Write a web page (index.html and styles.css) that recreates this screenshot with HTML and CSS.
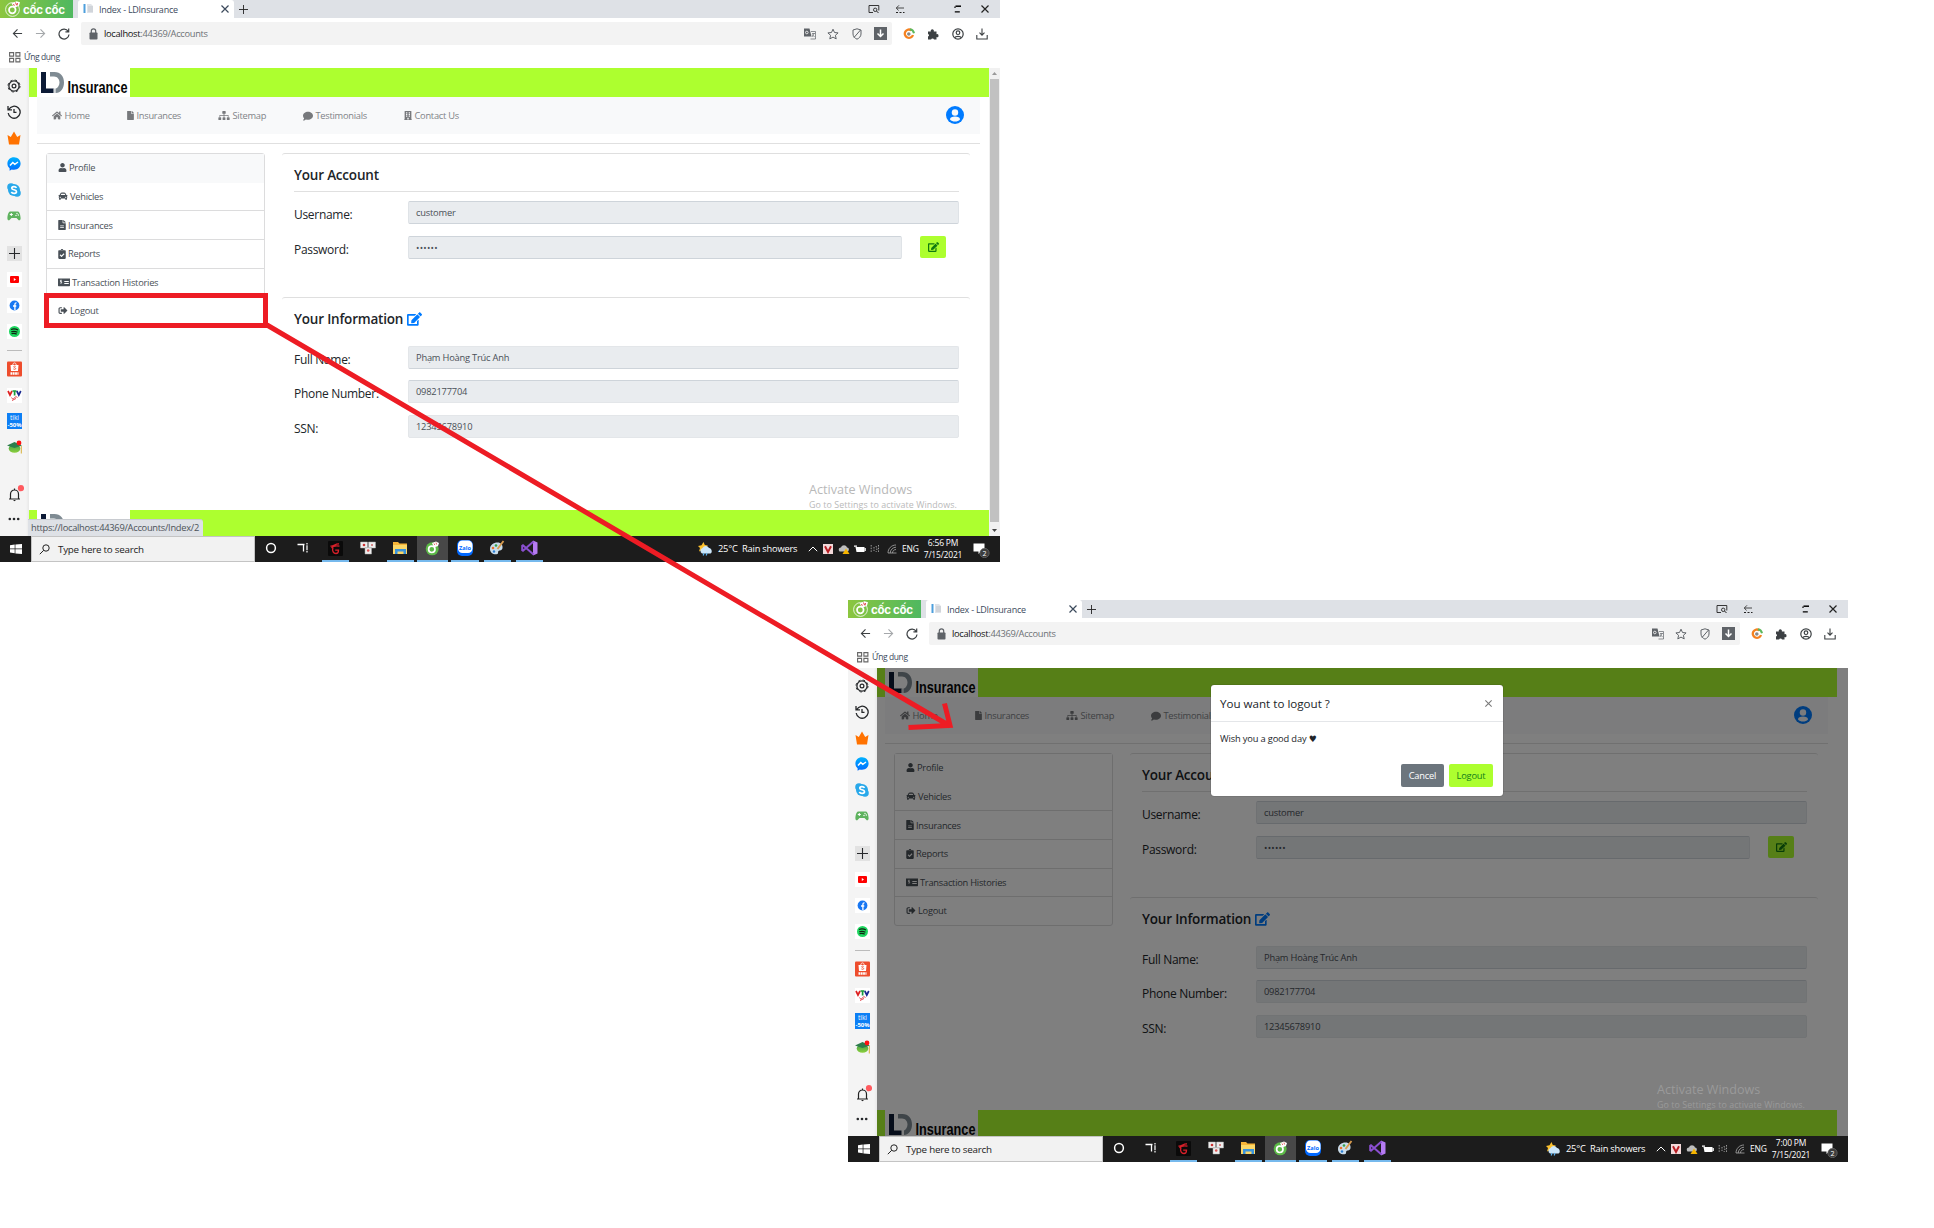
FILE: index.html
```html
<!DOCTYPE html>
<html lang="vi">
<head>
<meta charset="utf-8">
<title>Index - LDInsurance</title>
<link rel="stylesheet" href="styles.css">
</head>
<body>
<svg class="sprite" width="0" height="0">
  <defs>
    <linearGradient id="gMsg" x1="0" y1="0" x2="0" y2="1"><stop offset="0" stop-color="#00b2ff"/><stop offset="1" stop-color="#006aff"/></linearGradient>
    <linearGradient id="gCap" x1="0" y1="0" x2="0" y2="1"><stop offset="0" stop-color="#3f9a4a"/><stop offset="1" stop-color="#8dd13c"/></linearGradient>
  </defs>
  <symbol id="home" viewBox="0 0 576 512"><path d="M280 148 96 300v164c0 9 7 16 16 16l112-1c9 0 16-7 16-16v-95c0-9 7-16 16-16h64c9 0 16 7 16 16v95c0 9 7 16 16 16l112 1c9 0 16-7 16-16V300L296 148a12 12 0 0 0-16 0zm292 103-84-69V44c0-7-5-12-12-12h-56c-7 0-12 5-12 12v72l-90-74a48 48 0 0 0-61 0L4 251a12 12 0 0 0-1 17l25 31c4 5 12 6 17 2l235-194a12 12 0 0 1 16 0l235 194c5 4 13 3 17-2l26-31c4-5 3-13-2-17z"/></symbol>
  <symbol id="file" viewBox="0 0 384 512"><path d="M224 136V0H24C11 0 0 11 0 24v464c0 13 11 24 24 24h336c13 0 24-11 24-24V160H248c-13 0-24-11-24-24zm160-14v6H256V0h6c6 0 12 3 17 7l98 98c4 5 7 11 7 17z"/></symbol>
  <symbol id="filealt" viewBox="0 0 384 512"><path fill-rule="evenodd" d="M224 136V0H24C11 0 0 11 0 24v464c0 13 11 24 24 24h336c13 0 24-11 24-24V160H248c-13 0-24-11-24-24zm64 264H96v-40h192zm0-80H96v-40h192zm96-198v6H256V0h6c6 0 12 3 17 7l98 98c4 5 7 11 7 17z"/></symbol>
  <symbol id="sitemap" viewBox="0 0 640 512"><path d="M128 352H32c-18 0-32 14-32 32v96c0 18 14 32 32 32h96c18 0 32-14 32-32v-96c0-18-14-32-32-32zm-24-80h192v48h48v-48h192v48h48v-57c0-22-17-39-39-39H344v-64h40c18 0 32-14 32-32V32c0-18-14-32-32-32H256c-18 0-32 14-32 32v96c0 18 14 32 32 32h40v64H95c-22 0-39 17-39 39v57h48zm264 80h-96c-18 0-32 14-32 32v96c0 18 14 32 32 32h96c18 0 32-14 32-32v-96c0-18-14-32-32-32zm240 0h-96c-18 0-32 14-32 32v96c0 18 14 32 32 32h96c18 0 32-14 32-32v-96c0-18-14-32-32-32z"/></symbol>
  <symbol id="comment" viewBox="0 0 512 512"><path d="M256 32C115 32 0 125 0 240c0 50 21 95 57 131C45 421 3 467 2 468c-2 2-3 6-1 9s4 5 7 5c66 0 116-32 141-52 33 12 69 18 107 18 141 0 256-93 256-208S397 32 256 32z"/></symbol>
  <symbol id="building" viewBox="0 0 448 512"><path fill-rule="evenodd" d="M436 480h-20V24c0-13-11-24-24-24H56C43 0 32 11 32 24v456H12c-7 0-12 5-12 12v20h448v-20c0-7-5-12-12-12zM112 64h72v64h-72zm0 96h72v64h-72zm0 96h72v64h-72zm72 224v-96h80v96zm152-160h-72v-64h72zm0-96h-72v-64h72zm0-96h-72V64h72z"/></symbol>
  <symbol id="usercircle" viewBox="0 0 24 24"><circle cx="12" cy="12" r="12"/><circle cx="12" cy="8.600" r="4.300" fill="var(--hole,#fff)"/><path d="M5.300 18c0-3 3-4 6.700-4s6.700 1 6.700 4c-1.600 1.800-4 2.700-6.700 2.700S6.900 19.800 5.300 18z" fill="var(--hole,#fff)"/></symbol>
  <symbol id="user" viewBox="0 0 448 512"><path d="M224 256c71 0 128-57 128-128S295 0 224 0 96 57 96 128s57 128 128 128zm90 32h-17a174 174 0 0 1-146 0h-17C60 288 0 348 0 422v42c0 27 22 48 48 48h352c27 0 48-21 48-48v-42c0-74-60-134-134-134z"/></symbol>
  <symbol id="car" viewBox="0 0 512 512"><path fill-rule="evenodd" d="M500 168h-55l-8-20-21-52c-22-39-60-64-105-64H201c-45 0-83 25-105 64l-21 52-8 20H12c-8 0-14 7-12 15l6 24c1 5 6 9 12 9h20c-13 12-22 29-22 48v48c0 16 6 31 16 42v54c0 18 14 32 32 32h32c18 0 32-14 32-32v-32h256v32c0 18 14 32 32 32h32c18 0 32-14 32-32v-54c10-11 16-26 16-42v-48c0-19-9-36-22-48h20c6 0 11-4 12-9l6-24c2-8-4-15-12-15zm-348-48c8-15 28-24 49-24h110c21 0 41 9 49 24l24 56H128zM96 328c-19 0-32-13-32-32s13-32 32-32 48 29 48 48-29 16-48 16zm320 0c-19 0-48 3-48-16s29-48 48-48 32 13 32 32-13 32-32 32z"/></symbol>
  <symbol id="clip" viewBox="0 0 384 512"><path fill-rule="evenodd" d="M336 64h-80c0-35-29-64-64-64s-64 29-64 64H48c-26 0-48 22-48 48v352c0 27 22 48 48 48h288c27 0 48-21 48-48V112c0-26-21-48-48-48zM192 40a24 24 0 1 1 0 48 24 24 0 0 1 0-48zm121 232L176 408c-5 5-12 5-17 0l-82-82c-4-5-4-12 0-17l29-28c4-5 12-5 17 0l45 46 100-100c5-5 12-5 17 0l28 28c5 5 5 12 0 17z"/></symbol>
  <symbol id="check" viewBox="0 0 640 512"><path fill-rule="evenodd" d="M0 448c0 18 14 32 32 32h576c18 0 32-14 32-32V64H0zM336 200h240v50H336zm0 110h240v50H336zM100 200c0-40 30-50 46-52v-24h30v24c20 2 30 8 40 16l-18 26c-20-14-60-18-60 4 0 28 84 18 84 78 0 36-26 50-46 54v26h-30v-26c-20-2-38-10-48-20l20-26c22 18 66 20 66-4 0-30-84-20-84-76z"/></symbol>
  <symbol id="signout" viewBox="0 0 512 512"><path d="m497 273-168 168c-15 15-41 5-41-17v-96H152c-13 0-24-11-24-24v-96c0-13 11-24 24-24h136V88c0-21 26-32 41-17l168 168c9 9 9 25 0 34zM192 436v-40c0-7-5-12-12-12H96c-18 0-32-14-32-32V160c0-18 14-32 32-32h84c7 0 12-5 12-12V76c0-7-5-12-12-12H96c-53 0-96 43-96 96v192c0 53 43 96 96 96h84c7 0 12-5 12-12z"/></symbol>
  <symbol id="edit" viewBox="0 0 576 512"><path d="m403 83 90 90c4 4 4 10 0 14L274 406l-93 10c-12 2-23-9-21-21l10-93L389 83c4-4 10-4 14 0zm162-22-49-49c-15-15-40-15-55 0l-35 35c-4 4-4 10 0 14l90 90c4 4 10 4 14 0l35-35c15-15 15-40 0-55zM384 346v102H64V128h230c3 0 6-1 9-4l40-40c7-7 2-20-9-20H48C22 64 0 86 0 112v352c0 27 22 48 48 48h352c27 0 48-21 48-48V306c0-11-13-16-20-9l-40 40c-3 3-4 6-4 9z"/></symbol>
  <symbol id="close" viewBox="0 0 10 10"><path d="M1.500 1.500l7 7M8.500 1.500l-7 7" fill="none" stroke="currentColor" stroke-width="1.200"/></symbol>
  <symbol id="plus" viewBox="0 0 10 10"><path d="M5 0v10M0 5h10" fill="none" stroke="currentColor" stroke-width="1"/></symbol>
  <symbol id="back" viewBox="0 0 12 12"><path d="M11 6H1.500M6 1.500 1.500 6 6 10.500" fill="none" stroke="currentColor" stroke-width="1.200"/></symbol>
  <symbol id="forward" viewBox="0 0 12 12"><path d="M1 6h9.500M6 1.500 10.500 6 6 10.500" fill="none" stroke="currentColor" stroke-width="1.200"/></symbol>
  <symbol id="reload" viewBox="0 0 12 12"><path d="M10.200 3.300A5 5 0 1 0 11 6.500M10.700.600v3.200H7.400" fill="none" stroke="currentColor" stroke-width="1.200"/></symbol>
  <symbol id="lock" viewBox="0 0 9 12"><rect x=".5" y="4.500" width="8" height="7" rx=".8"/><path d="M2.300 5V3a2.200 2.200 0 0 1 4.400 0v2" fill="none" stroke="currentColor" stroke-width="1.200"/></symbol>
  <symbol id="apps" viewBox="0 0 12 11"><path d="M.6.600h4v3.500h-4zM6.900.600h4v3.500h-4zM.6 6.400h4v3.500h-4zM6.900 6.400h4v3.500h-4z" fill="none" stroke="currentColor" stroke-width="1.100"/></symbol>
  <symbol id="tabsearch" viewBox="0 0 12 10"><path d="M5 8.500H1v-7h9.800v5" fill="none" stroke="currentColor" stroke-width=".9"/><circle cx="7.200" cy="5.800" r="1.700" fill="none" stroke="currentColor" stroke-width=".9"/><path d="m8.500 7 2 2" stroke="currentColor"/></symbol>
  <symbol id="minim" viewBox="0 0 10 10"><path d="M9 4H1.500M4 1.300 1.300 4 3.500 6.500" fill="none" stroke="currentColor" stroke-width=".8"/><path d="M1 8.500h8.500" stroke="currentColor" stroke-dasharray="2 1.500"/></symbol>
  <symbol id="restore" viewBox="0 0 8 8"><path d="M1.500 1.200H7" stroke="currentColor" stroke-width="1.500"/><path d="M1 1.500v1.500M.8 6.800h5" stroke="currentColor" stroke-width="1.200"/></symbol>
  <symbol id="translate" viewBox="0 0 12 12"><path d="M0 .5h5.500l2 8H0z"/><path d="M7 3.500h4.500v7.500H6.500M8 5.500h3M9.800 5.500 8 9M8.300 6.500l2.200 2.500" fill="none" stroke="currentColor" stroke-width=".7"/><circle cx="2.800" cy="4.500" r="1.300" fill="none" stroke="#fff" stroke-width=".8"/></symbol>
  <symbol id="star" viewBox="0 0 12 12"><path d="m6 1.200 1.500 3.300 3.600.400-2.700 2.400.8 3.600L6 9.100l-3.200 1.800.8-3.600L.9 4.900l3.600-.4z" fill="none" stroke="currentColor"/></symbol>
  <symbol id="shield" viewBox="0 0 12 12"><path d="M6 .8 2 2v4c0 2.500 2 4.300 4 5.200 2-.9 4-2.700 4-5.200V2zM3 9.500 9.500 2" fill="none" stroke="currentColor"/></symbol>
  <symbol id="dlbox" viewBox="0 0 13 13"><path d="M0 0h13v13H0z"/><path d="M6.500 2.500v7M3.500 6.500l3 3 3-3" fill="none" stroke="#fff" stroke-width="1.500"/></symbol>
  <symbol id="cring" viewBox="0 0 12 12"><path d="M8.500 2.300A4.200 4.200 0 1 0 10 7" fill="none" stroke="#f58220" stroke-width="2.300"/><path d="M7 1.200a5 5 0 0 1 4 4" fill="none" stroke="#5cb85c" stroke-width="2"/><circle cx="5.800" cy="6" r="1.800" fill="#888"/></symbol>
  <symbol id="puzzle" viewBox="0 0 12 12"><path d="M1 3.500h2.800a1.600 1.600 0 1 1 3 0H9.500v2.800a1.500 1.500 0 1 1 0 2.800V11.500H7a1.500 1.500 0 0 0-2.900 0H1V8.600a1.400 1.400 0 0 0 0-2.700z"/></symbol>
  <symbol id="person" viewBox="0 0 12 12"><circle cx="6" cy="6" r="5.200" fill="none" stroke="currentColor" stroke-width="1.200"/><circle cx="6" cy="4.700" r="1.800" fill="none" stroke="currentColor" stroke-width="1.200"/><path d="M2.700 9.700c.8-1.700 5.800-1.700 6.600 0" fill="none" stroke="currentColor" stroke-width="1.200"/></symbol>
  <symbol id="download" viewBox="0 0 12 12"><path d="M6 .5v6.500M3.500 4.700 6 7.200l2.500-2.500M.8 7v4h10.400V7" fill="none" stroke="currentColor" stroke-width="1.100"/></symbol>
  <symbol id="gear" viewBox="0 0 14 14"><circle cx="7" cy="7" r="5.100" fill="none" stroke="currentColor" stroke-width="1.300"/><circle cx="7" cy="7" r="6" fill="none" stroke="currentColor" stroke-width="1" stroke-dasharray="2.356 2.356"/><circle cx="7" cy="7" r="1.900" fill="none" stroke="currentColor" stroke-width="1.200"/></symbol>
  <symbol id="history" viewBox="0 0 14 14"><path d="M1.800 4.500A6 6 0 1 1 1.200 8M1 1v3.800h4M7 4v3.300h2.500" fill="none" stroke="currentColor" stroke-width="1.300"/></symbol>
  <symbol id="crown" viewBox="0 0 14 14"><path d="m.5 4 3.300 2L7 .5 10.200 6l3.300-2-1.500 9.500H2z" fill="#ff7200"/></symbol>
  <symbol id="messenger" viewBox="0 0 14 14"><path d="M7 .3C3.200.300.400 3 .4 6.600c0 2 .8 3.600 2.200 4.700v2.400l2.100-1.200c.7.200 1.500.3 2.300.3 3.800 0 6.600-2.700 6.600-6.200S10.800.300 7 .300z" fill="url(#gMsg)"/><path d="m3 8.500 2.800-3 2 1.800L11 5" fill="none" stroke="#fff" stroke-width="1.500"/></symbol>
  <symbol id="skype" viewBox="0 0 14 14"><circle cx="7" cy="7" r="6" fill="#28a8ea"/><circle cx="4" cy="4" r="3.800" fill="#28a8ea"/><circle cx="10" cy="10" r="3.800" fill="#28a8ea"/><path d="M9.500 4.800C8.500 3 4.700 3.200 4.800 5.200c.1 2 4.700 1.200 4.700 3.500 0 2-4 2.200-5.200.3" fill="none" stroke="#fff" stroke-width="1.700"/></symbol>
  <symbol id="gamepad" viewBox="0 0 14 14"><path d="M3 2.500h8c1.500 0 2.500 4 2.600 6.500.1 2.500-1.600 3-2.600 1.500L9.500 9h-5L3 10.500C2 12 .3 11.500.400 9 .5 6.500 1.500 2.500 3 2.500z" fill="#5eb35e"/><path d="M4.300 4v3M2.800 5.500h3" stroke="#fff"/><circle cx="10" cy="4.500" r=".7" fill="#fff"/><circle cx="9" cy="6.500" r=".7" fill="#fff"/><circle cx="11.300" cy="6" r=".7" fill="#fff"/></symbol>
  <symbol id="youtube" viewBox="0 0 15 15"><path d="M0 0h15v15H0z" fill="#fff"/><rect x="3" y="4" width="9" height="7" rx="1" fill="#f00"/><path d="m6.800 6 2.200 1.500L6.800 9z" fill="#fff"/></symbol>
  <symbol id="facebook" viewBox="0 0 15 15"><path d="M0 0h15v15H0z" fill="#fff"/><circle cx="7.500" cy="7.500" r="4.900" fill="#1877f2"/><path d="M7.900 12.300V6.200c0-1 .5-1.400 1.600-1.300M6 8h3.300" stroke="#fff" stroke-width="1.300" fill="none"/></symbol>
  <symbol id="spotify" viewBox="0 0 15 15"><path d="M0 0h15v15H0z" fill="#fff"/><circle cx="7.500" cy="7.500" r="5.500" fill="#1ed760"/><path d="M4 5.500c2-.8 5-.6 7 .5M4.200 7.700c2-.6 4.500-.4 6.200.5M4.500 9.700c2-.5 3.700-.3 5.200.4" fill="none" stroke="#121" stroke-width="1.200"/></symbol>
  <symbol id="shopee" viewBox="0 0 15 15"><rect width="15" height="15" rx="1" fill="#ee4d2d"/><path d="M3.500 3.500h8l-.5 6H4z" fill="#fff"/><path d="M5.800 3.500c0-2.800 3.400-2.800 3.400 0" fill="none" stroke="#fff" stroke-width=".8"/><path d="M8.800 5c-1-.8-2.400-.3-2.200.5s2.100.6 2.100 1.600-1.600 1-2.400.3" fill="none" stroke="#ee4d2d" stroke-width=".8"/><path d="M3.500 12h8" stroke="#fff" stroke-width="2.400" stroke-dasharray="1.800 .5"/></symbol>
  <symbol id="vtv" viewBox="0 0 15 15"><path d="M0 0h15v15H0z" fill="#fff"/><path d="m1 3 2 4 2-4" fill="none" stroke="#d22" stroke-width="1.700"/><path d="M5.500 3h4M7.600 3v4.500" fill="none" stroke="#1a9a3a" stroke-width="1.700"/><path d="m9.800 3 2 4 2-4" fill="none" stroke="#1a2a90" stroke-width="1.700"/><path d="M4.500 9.500c1 2 2 2 3 .3s2-1 3-.3M5 12.500l4-2" fill="none" stroke="#e04a50" stroke-width="1"/></symbol>
  <symbol id="cap" viewBox="0 0 15 15"><ellipse cx="7.500" cy="8.500" rx="5.800" ry="4.300" fill="url(#gCap)"/><path d="m0 5.500 7.500-3.500L15 5.500 7.500 8z" fill="#2c7d4c"/><path d="M14.300 6v7.500" stroke="#d8b13a"/><circle cx="12" cy="3" r="2.400" fill="#f11"/></symbol>
  <symbol id="bell" viewBox="0 0 17 17"><path d="M2 14h11M3.500 14V9a4 4 0 0 1 8 0v5M7.500 5V3.500" fill="none" stroke="#222" stroke-width="1.200"/><path d="M6 15h3l-1.500 1.300z" fill="#222"/><circle cx="14" cy="3.200" r="3.100" fill="#ff5a5f"/></symbol>
  <symbol id="dots" viewBox="0 0 12 4"><circle cx="1.800" cy="2" r="1.300"/><circle cx="6" cy="2" r="1.300"/><circle cx="10.200" cy="2" r="1.300"/></symbol>
  <symbol id="cocmark" viewBox="0 0 16 16"><circle cx="7.500" cy="8.500" r="6.900" fill="none" stroke="#fff" stroke-width=".8"/><circle cx="7.300" cy="9" r="3.300" fill="none" stroke="#fff" stroke-width="1.700"/><path d="m6.500 2.500 5-2.200 3.500 1-1 3.500-4.500 2z" fill="#fff"/><path d="m8.500 3 .8 1.800M10.500 1.500l1 2.500M12.500 2l-.5 2.500" stroke="#d33" fill="none" stroke-width=".9"/></symbol>
  <symbol id="favicon" viewBox="0 0 12 12"><path d="M.5 1h2v9h-2z" fill="#4d9fdc"/><path d="M4 1h4l2 2v7H4z" fill="#e0e3e8"/><path d="M5 4h5M5 6h5M5 8h5" stroke="#b5bac2" stroke-width=".7"/></symbol>
  <symbol id="win" viewBox="0 0 12 10"><path d="m0 1.300 4.700-.7v4H0zM5.400.500 12 0v4.600H5.400zM0 5.300h4.700v4L0 8.600zM5.400 5.300H12V10l-6.600-.600z"/></symbol>
  <symbol id="find" viewBox="0 0 11 11"><circle cx="7" cy="4" r="3.200" fill="none" stroke="currentColor"/><path d="M4.700 6.300.8 10.200" stroke="currentColor"/></symbol>
  <symbol id="ring" viewBox="0 0 12 12"><circle cx="6" cy="6" r="4.400" fill="none" stroke="currentColor" stroke-width="1.500"/></symbol>
  <symbol id="task" viewBox="0 0 12 12"><path d="M.5 2.500h7M6.500 2.500v7" stroke="currentColor" stroke-width="1.300" fill="none"/><path d="M10 1v9.500" stroke="currentColor" stroke-width="1.200" stroke-dasharray="1.500 .8 5 .8"/></symbol>
  <symbol id="garena" viewBox="0 0 15 15"><rect width="15" height="15" rx="1" fill="#0a0a0a"/><path d="M2.500 5c3 .5 5-2.500 8.500-2M3.500 7c1.500-2 5-2.300 8-1.800M5 6.500c-1.200 3.500.5 6 3 6 1.800 0 2.500-1.200 2.500-3.300H7.200" fill="none" stroke="#d8202a" stroke-width="1.300"/></symbol>
  <symbol id="tiles" viewBox="0 0 16 14"><path d="M.5 1h7v6h-7zM8.500 1h7v6h-7zM5 6.500h6.500V13H5z" fill="#eee" stroke="#aaa" stroke-width=".5"/><circle cx="4" cy="4" r="1.300" fill="#c33"/><circle cx="12" cy="4" r="1" fill="#c66"/><circle cx="8.200" cy="9.500" r="1.300" fill="#d55"/></symbol>
  <symbol id="folder" viewBox="0 0 16 14"><path d="M1 1h5l1.500 1.500H15V12H1z" fill="#f7b538"/><path d="M1 4h14v9H1z" fill="#fbd768"/><path d="M3 13V8h11v5h-2.500v-2.500h-6V13z" fill="#3a94dc"/></symbol>
  <symbol id="coccoc" viewBox="0 0 15 15"><circle cx="7.200" cy="7.800" r="6.500" fill="#5cb947"/><circle cx="6.800" cy="8.300" r="3.200" fill="none" stroke="#fff" stroke-width="1.700"/><path d="m7 2 4-1.500L14 2l-1 3-4 1.500z" fill="#fff"/><path d="m9 2.500.8 1.500M11 1.500l.6 2" fill="none" stroke="#d44" stroke-width=".8"/></symbol>
  <symbol id="paint" viewBox="0 0 16 16"><path d="M1 9c0-4 3.500-6.500 7.500-6.500C12 2.500 14 5 13.500 8s-3 2-4 3 .5 3-2 3.300C4 14.700 1 12.500 1 9z" fill="#c9dcea"/><circle cx="4" cy="8" r="1.300" fill="#e8732e"/><circle cx="7" cy="5.500" r="1.300" fill="#36a04a"/><circle cx="5" cy="11.500" r="1.200" fill="#2b7fd4"/><path d="M14.500 1 8.500 9" stroke="#d99b4e" stroke-width="1.800"/></symbol>
  <symbol id="vs" viewBox="0 0 17 16"><path d="m12 .5 4.500 2v11l-4.500 2z" fill="#b57bf2"/><path d="M12.500 1.500 2 10.800l-.8-.6V5.800l.8-.6 10.500 9.300" fill="none" stroke="#8a4fd0" stroke-width="2"/></symbol>
  <symbol id="weather" viewBox="0 0 15 14"><path d="m5.500 0 1.300 3 3 .5-2 2.500.7 3.500L4 8 1 9.500 2 6 0 4l3.500-.8z" fill="#fbc02d"/><path d="M4 11.500a3 3 0 0 1 .5-5.500 3.700 3.700 0 0 1 6.500 0c2.500-.2 4 4.500 1.500 5.500z" fill="#cbe6fa"/><path d="m6 11-.8 2.500M9 11l-.8 2.500" stroke="#5ab0ee" stroke-width="1.200"/></symbol>
  <symbol id="up" viewBox="0 0 10 6"><path d="M.8 5.200 5 1l4.200 4.200" fill="none" stroke="currentColor"/></symbol>
  <symbol id="vkey" viewBox="0 0 10 10"><path d="M0 0h10v10H0z" fill="#f3dada"/><path d="M2 2.200 5 8l3-5.800" fill="none" stroke="#b81c22" stroke-width="1.900"/></symbol>
  <symbol id="cloud" viewBox="0 0 12 10"><path d="M1.500 7.500C-.5 5 2 3 3 3.500 4 .5 8 .5 9 3.500c2 0 2.500 2.500 1 4z" fill="#bdbdbd"/><path d="M8 4.500 11.500 10h-7z" fill="#f7b500"/></symbol>
  <symbol id="battery" viewBox="0 0 12 8"><path d="M0 .5h3v1.300H0zM1.500 2H10.500v5h-8z"/><path d="M10.500 3h1.300v3h-1.300z"/></symbol>
  <symbol id="sound" viewBox="0 0 10 10"><path d="M1.200 1v8M4 3v4M6 2l1 3-1 3M8.500 1v8" fill="none" stroke="currentColor" stroke-width=".9" stroke-dasharray="1.500 1.200"/></symbol>
  <symbol id="wifi" viewBox="0 0 10 10"><path d="M1 9C1 4.500 4.500 1 9 1M3.200 9C3.200 6 6 3.200 9 3.200M5.500 9c0-2 1.500-3.500 3.500-3.500M1 9h8.500" fill="none" stroke="currentColor" stroke-width=".8"/></symbol>
</svg>

<template id="desktop">
  <div class="tabs">
    <div class="brand"><svg width="16" height="16"><use href="#cocmark"/></svg><b>cốc cốc</b></div>
    <div class="tab"><svg width="12" height="12"><use href="#favicon"/></svg><span>Index - LDInsurance</span><svg width="10" height="10"><use href="#close"/></svg></div>
    <svg class="newtab" width="9" height="9"><use href="#plus"/></svg>
    <div class="winctl">
      <svg width="12" height="10"><use href="#tabsearch"/></svg>
      <svg width="10" height="10"><use href="#minim"/></svg>
      <svg width="8" height="8"><use href="#restore"/></svg>
      <svg width="10" height="10"><use href="#close"/></svg>
    </div>
  </div>
  <div class="toolbar">
    <div class="navbtns">
      <svg width="11" height="11"><use href="#back"/></svg>
      <svg class="dim" width="11" height="11"><use href="#forward"/></svg>
      <svg width="12" height="12"><use href="#reload"/></svg>
    </div>
    <div class="url">
      <svg width="9" height="12"><use href="#lock"/></svg>
      <span class="addr"><i>localhost</i>:44369/Accounts</span>
      <div class="urlicons">
        <svg width="12" height="12"><use href="#translate"/></svg>
        <svg width="12" height="12"><use href="#star"/></svg>
        <svg width="12" height="12"><use href="#shield"/></svg>
        <svg width="13" height="13"><use href="#dlbox"/></svg>
      </div>
    </div>
    <div class="exts">
      <svg width="12" height="12"><use href="#cring"/></svg>
      <svg width="12" height="12"><use href="#puzzle"/></svg>
      <svg width="12" height="12"><use href="#person"/></svg>
      <svg width="12" height="12"><use href="#download"/></svg>
    </div>
  </div>
  <div class="bookmarks"><svg width="12" height="11"><use href="#apps"/></svg><span>Ứng dụng</span></div>

  <div class="body">
    <div class="side">
      <div><svg width="14" height="14"><use href="#gear"/></svg></div>
      <div><svg width="14" height="14"><use href="#history"/></svg></div>
      <div><svg width="14" height="14"><use href="#crown"/></svg></div>
      <div><svg width="14" height="14"><use href="#messenger"/></svg></div>
      <div><svg width="14" height="14"><use href="#skype"/></svg></div>
      <div><svg width="14" height="14"><use href="#gamepad"/></svg></div>
      <div class="add"><b><svg width="11" height="11"><use href="#plus"/></svg></b></div>
      <div><svg width="15" height="15"><use href="#youtube"/></svg></div>
      <div><svg width="15" height="15"><use href="#facebook"/></svg></div>
      <div><svg width="15" height="15"><use href="#spotify"/></svg></div>
      <hr>
      <div><svg width="15" height="16"><use href="#shopee"/></svg></div>
      <div><svg width="15" height="15"><use href="#vtv"/></svg></div>
      <div><span class="tiki"><svg width="15" height="16"><path d="M0 0h15v16H0z" fill="#0d7ff5"/><text x="7.500" y="7" text-anchor="middle" font-size="6.500">tiki</text><text x=".5" y="13.500" font-size="6" font-weight="700" textLength="14" lengthAdjust="spacingAndGlyphs">-50%</text></svg></span></div>
      <div><svg width="15" height="15"><use href="#cap"/></svg></div>
      <div class="bell"><svg width="17" height="17"><use href="#bell"/></svg></div>
      <div><svg width="12" height="4"><use href="#dots"/></svg></div>
    </div>
    <div class="page">
      <div class="band"><svg class="logo" width="93" height="29"><path d="M4 4h5v16.500h7.500V25H4z" fill="#0c1a35"/><path d="M13 4h4.500C23.500 4 27 8.500 27 14.500S23.500 25 19 25v-4.500c1.800-.8 3.500-3 3.500-6s-2-6-5.500-6h-4z" fill="#7f8b93"/><path d="M16.700 20.500V25M18.200 20.500V25" stroke="#7f8b93" stroke-width=".7"/><text x="30.500" y="25" textLength="60" lengthAdjust="spacingAndGlyphs">Insurance</text></svg></div>
      <nav class="nav">
        <a><svg width="10" height="9"><use href="#home"/></svg>Home</a>
        <a><svg width="7" height="9"><use href="#file"/></svg>Insurances</a>
        <a><svg width="12" height="9"><use href="#sitemap"/></svg>Sitemap</a>
        <a><svg width="10" height="10"><use href="#comment"/></svg>Testimonials</a>
        <a><svg width="8" height="9"><use href="#building"/></svg>Contact Us</a>
        <svg class="me" width="18" height="18"><use href="#usercircle"/></svg>
      </nav>
      <hr class="rule">
      <div class="cols">
        <div class="menu">
          <a class="on"><svg width="9" height="9"><use href="#user"/></svg>Profile</a>
          <a><svg width="10" height="9"><use href="#car"/></svg>Vehicles</a>
          <a><svg width="8" height="10"><use href="#filealt"/></svg>Insurances</a>
          <a><svg width="8" height="10"><use href="#clip"/></svg>Reports</a>
          <a><svg width="12" height="10"><use href="#check"/></svg>Transaction Histories</a>
          <a><svg width="10" height="9"><use href="#signout"/></svg>Logout</a>
        </div>
        <div class="cards">
          <section class="card account">
            <h2>Your Account</h2>
            <div class="row"><label>Username:</label><span class="field">customer</span></div>
            <div class="row"><label>Password:</label><span class="field pw">••••••</span><button class="editbtn"><svg width="11" height="10"><use href="#edit"/></svg></button></div>
          </section>
          <section class="card info">
            <h2>Your Information <svg width="15" height="14"><use href="#edit"/></svg></h2>
            <div class="row"><label>Full Name:</label><span class="field">Phạm Hoàng Trúc Anh</span></div>
            <div class="row"><label>Phone Number:</label><span class="field">0982177704</span></div>
            <div class="row"><label>SSN:</label><span class="field">12345678910</span></div>
          </section>
        </div>
      </div>
      <div class="band foot"><svg class="logo" width="93" height="29"><path d="M4 4h5v16.500h7.500V25H4z" fill="#0c1a35"/><path d="M13 4h4.500C23.500 4 27 8.500 27 14.500S23.500 25 19 25v-4.500c1.800-.8 3.500-3 3.500-6s-2-6-5.500-6h-4z" fill="#7f8b93"/><text x="30.500" y="25" textLength="60" lengthAdjust="spacingAndGlyphs">Insurance</text></svg></div>
    </div>
    <div class="scroll"><svg class="arr" width="5" height="3"><path d="M0 3 2.500 0 5 3z"/></svg><b></b><svg class="arr dn" width="5" height="3"><path d="M0 0h5L2.500 3z"/></svg></div>
    <div class="shade"></div>
    <div class="status">https://localhost:44369/Accounts/Index/2</div>
    <div class="mark"><p>Activate Windows</p><small>Go to Settings to activate Windows.</small></div>
  </div>

  <div class="taskbar">
    <div class="start"><svg width="12" height="10"><use href="#win"/></svg></div>
    <div class="search"><svg width="11" height="11"><use href="#find"/></svg><span>Type here to search</span></div>
    <div class="apps">
      <div><svg width="12" height="12"><use href="#ring"/></svg></div>
      <div><svg width="12" height="12"><use href="#task"/></svg></div>
      <div class="run"><svg width="15" height="15"><use href="#garena"/></svg></div>
      <div><svg width="16" height="14"><use href="#tiles"/></svg></div>
      <div class="run"><svg width="16" height="14"><use href="#folder"/></svg></div>
      <div class="run cur"><svg width="15" height="15"><use href="#coccoc"/></svg></div>
      <div class="run"><svg class="zalo" width="16" height="16"><rect width="16" height="16" rx="5" fill="#0068ff"/><rect x="1" y=".5" width="14.500" height="12.500" rx="4.500" fill="#fff"/><text x="2" y="9.500" textLength="12" lengthAdjust="spacingAndGlyphs">Zalo</text></svg></div>
      <div class="run"><svg width="16" height="16"><use href="#paint"/></svg></div>
      <div class="run"><svg width="17" height="16"><use href="#vs"/></svg></div>
    </div>
    <div class="tray">
      <svg width="15" height="14"><use href="#weather"/></svg>
      <span>25°C</span><span>Rain showers</span>
      <svg width="10" height="6"><use href="#up"/></svg>
      <svg width="10" height="10"><use href="#vkey"/></svg>
      <svg width="12" height="10"><use href="#cloud"/></svg>
      <svg width="12" height="8"><use href="#battery"/></svg>
      <svg class="faint" width="10" height="10"><use href="#sound"/></svg>
      <svg class="faint" width="10" height="10"><use href="#wifi"/></svg>
      <span class="eng">ENG</span>
      <span class="clock"><b class="time"></b><b>7/15/2021</b></span>
      <svg class="note" width="17" height="15"><path d="M.5.500h11v8H8L5.500 11V8.500h-5z" fill="#fff"/><circle cx="11.500" cy="10" r="4.700" fill="#3d3d3d" stroke="#777" stroke-width=".6"/><text x="11.500" y="12.600" text-anchor="middle">2</text></svg>
    </div>
  </div>
</template>

<main class="canvas">
  <div class="shot first" data-time="6:56 PM"></div>
  <div class="shot second" data-time="7:00 PM">
    <div class="modal">
      <header><h3>You want to logout ?</h3><svg width="9" height="9"><use href="#close"/></svg></header>
      <p>Wish you a good day <span>♥</span></p>
      <footer><button class="cancel">Cancel</button><button class="go">Logout</button></footer>
    </div>
  </div>
  <svg class="ink" width="1934" height="1228">
    <path d="M46.500 295.500h219v30h-219zM267 325 950 726M908.500 727.500 950 725.500 944.500 703.500" fill="none" stroke="#ed1c24" stroke-width="5"/>
  </svg>
</main>
<script src="script.js"></script>
</body>
</html>
```
FILE: styles.css
```css
* { box-sizing: border-box; margin: 0; padding: 0; }
body { width: 1934px; height: 1228px; background: #fff; overflow: hidden; font-family: "Open Sans", "Noto Sans", sans-serif; color: #212529; }
svg { display: block; flex: none; fill: currentColor; }
.sprite { position: absolute; }
.canvas { position: relative; width: 1934px; height: 1228px; }
.shot { position: absolute; width: 1000px; height: 562px; display: flex; flex-direction: column; background: #fff; overflow: hidden; white-space: nowrap; }
.first { left: 0; top: 0; }
.second { left: 848px; top: 600px; }
.ink { position: absolute; left: 0; top: 0; }
i, b { font-style: normal; }

/* browser chrome */
.tabs { height: 18px; background: #dee1e6; display: flex; align-items: center; color: #222; }
.brand { width: 73px; height: 18px; background: linear-gradient(90deg, #8cc63f, #4fb860); display: flex; align-items: center; padding-left: 5px; gap: 2px; color: #fff; }
.brand b { font: 700 11.500px/16px "Inter", sans-serif; letter-spacing: -.3px; padding-top: 2px; }
.tab { width: 156px; height: 18px; margin-left: 5px; background: #fff; border-radius: 3px 3px 0 0; display: flex; align-items: center; padding: 0 4px 0 5px; font-size: 9px; color: #3c4a5c; }
.tab span { flex: 1; padding-left: 4px; letter-spacing: -.25px; }
.newtab { margin-left: 5px; }
.winctl { margin-left: auto; display: grid; grid-template-columns: 26px 55px 31px 22px; justify-items: center; align-items: center; padding-right: 5px; }
.winctl svg:nth-child(2) { justify-self: start; margin-left: 8px; }
.winctl svg:nth-child(3) { color: #000; }
.winctl svg:nth-child(4) { justify-self: end; margin-right: 5px; }
.toolbar { height: 31px; padding-top: 4px; display: flex; color: #3c4043; }
.navbtns { width: 81px; height: 23px; display: flex; align-items: center; padding-left: 12px; gap: 12px; }
.dim { color: #a5a8ab; }
.url { width: 811px; height: 23px; background: #f3f3f3; border-radius: 2px; display: flex; align-items: center; padding: 0 5px 0 8px; color: #5f6368; }
.addr { font-size: 9.300px; padding-left: 6px; letter-spacing: -.3px; color: #6d7175; flex: 1; }
.addr i { color: #111; }
.urlicons { display: flex; gap: 11.500px; align-items: center; }
.exts { height: 23px; display: flex; align-items: center; padding-left: 11px; gap: 12.300px; }
.bookmarks { height: 19px; display: flex; align-items: center; padding: 0 0 3px 9px; gap: 3px; font-size: 8.500px; color: #3c4a5c; line-height: 14px; }
.bookmarks span { letter-spacing: -.4px; }
.bookmarks svg { color: #666; }

/* page area */
.body { height: 468px; display: flex; position: relative; }
.side { width: 29px; background: linear-gradient(90deg, #f4f4f4 26px, #e8e8e8); padding-top: 5px; color: #26282b; }
.side div { height: 26px; display: flex; align-items: center; justify-content: center; padding-right: 1px; }
.side .add { margin-top: 11.500px; }
.add b { width: 15px; height: 15px; background: #e2e2e2; display: grid; place-items: center; }
.side hr { border: 0; height: 1px; width: 15px; background: #bbb; margin: 5px auto 5.500px 7px; }
.side .bell { margin-top: 20px; padding: 0 0 0 2px; }
.tiki text { fill: #fff; }
.page { width: 960px; display: flex; flex-direction: column; overflow: hidden; }
.band { height: 29px; background: #adff2f; padding-left: 8px; flex: none; }
.logo { background: #fff; }
.logo text { font: 700 16px "Liberation Sans", sans-serif; fill: #080808; }
.nav { margin: 0 9px 0 8px; height: 37px; flex: none; background: #f8f9fa; padding: 0 16px 0 15px; display: grid; grid-template-columns: 75px 91px 85px 101px 1fr auto; align-items: center; font-size: 9.300px; color: #808387; }
.nav a { display: flex; align-items: center; gap: 2.500px; letter-spacing: -.27px; }
.nav svg { color: #77797c; }
.nav .me { color: #007bff; --hole: #f8f9fa; margin-top: -1px; }
.rule { border: 0; height: 1px; background: #e0e0e0; margin: 9px 9px 9px 8px; flex: none; }
.cols { display: flex; flex: 1; padding-left: 17px; align-items: flex-start; }
.menu { width: 219px; border: 1px solid #dcdcdd; border-radius: 3px; font-size: 9.300px; color: #495057; }
.menu a { height: 28.650px; display: flex; align-items: center; gap: 2px; padding-left: 11px; border-bottom: 1px solid #dcdcdd; letter-spacing: -.25px; }
.menu a.on { background: #f8f9fa; border-bottom-color: #f8f9fa; }
.menu a:last-child { border-bottom: 0; height: 28px; padding-bottom: 1px; }
.cards { width: 688px; margin-left: 17px; }
.card { border-top: 1px solid #dfdfdf; border-radius: 3px; padding: 0 11px 0 12px; }
.account { height: 131px; margin-bottom: 13px; }
.info { height: 166px; }
.card h2 { height: 38px; font-size: 13.500px; font-weight: 600; line-height: 18px; letter-spacing: -.2px; display: flex; align-items: center; gap: 4px; padding-top: 4px; }
.account h2 { border-bottom: 1px solid #e0e0e0; margin-bottom: 9px; }
.card.info h2 { height: 48px; padding: 0 0 6px; }
.info h2 svg { color: #007bff; }
.row { display: flex; height: 34.500px; }
.row label { width: 114px; font-size: 12px; line-height: 27px; letter-spacing: -.3px; }
.row .field { flex: 1; height: 23px; background: #e9ecef; border: 1px solid #ced4da; border-left-color: #dfe3e7; border-right-color: #dfe3e7; border-radius: 2px; font-size: 9.300px; line-height: 21px; padding-left: 7px; color: #495057; letter-spacing: -.2px; }
.info .row { height: 34.300px; }
.info .field { border-color: #e3e6e9; }
.info .row:nth-child(2) .field { border-bottom-color: #ced4da; }
.info .row:nth-child(3) .field { border-top-color: #ced4da; }
.row .pw { flex: none; width: 494px; font-size: 9px; letter-spacing: .25px; }
.editbtn { width: 26px; height: 22px; margin-left: 18px; border: 0; border-radius: 2px; background: #adff2f; color: #107a10; display: grid; place-items: center; }
.foot { height: 26px; }
.scroll { width: 11px; background: #f1f1f1; display: flex; flex-direction: column; align-items: center; }
.scroll b { width: 9px; flex: 1; background: #c1c1c1; }
.arr { margin: 4px 0; color: #999; }
.arr.dn { margin: 7px 0 4px; color: #444; }
.shade { display: none; position: absolute; left: 29px; top: 0; width: 971px; height: 468px; background: rgba(0,0,0,.5); }
.status { position: absolute; left: 28px; top: 451px; width: 175px; height: 17px; background: #dee1e6; border-top: 1px solid #c8cbd0; border-radius: 0 3px 0 0; font-size: 9.300px; line-height: 16px; padding-left: 3px; color: #4c5258; letter-spacing: -.27px; }
.mark { position: absolute; left: 809px; top: 412px; color: #b9b9b9; }
.mark p { font-size: 12.600px; line-height: 19px; letter-spacing: 0; }
.mark small { display: block; font-size: 8.900px; line-height: 11px; letter-spacing: .07px; }

/* taskbar */
.taskbar { height: 26px; background: #1c1c1c; color: #fff; display: flex; }
.start { width: 31px; display: grid; place-items: center; }
.search { width: 224px; background: #f2f2f2; border: 1px solid #c4c4c4; display: flex; align-items: center; padding-left: 7px; gap: 8px; color: #222; font-size: 9.800px; letter-spacing: -.23px; }
.apps { display: grid; grid-template-columns: repeat(9, 32.300px); }
.apps div { display: grid; place-items: center; border-bottom: 2px solid transparent; margin: 0 2.500px; }
.apps .run { border-bottom-color: #76b9ed; }
.apps .cur { background: #484848; margin: 0 .5px; }
.zalo text { font: 700 6px "Open Sans", sans-serif; fill: #0068ff; }
.tray { margin-left: auto; width: 302px; display: grid; grid-template-columns: 20px 24px 66px 15px 15px 16px 16px 17px 15px 21px 40px 37px; align-items: center; font-size: 9.300px; letter-spacing: -.2px; line-height: 12px; }
.tray .eng { font-size: 8.500px; }
.clock { display: flex; flex-direction: column; align-items: center; font-size: 8.500px; }
.clock b { font-weight: 400; }
.note { margin: 3px 0 0 10px; }
.note text { font: 7px "Open Sans", sans-serif; fill: #fff; }
.faint { color: #aaa; }

/* dimmed state with dialog */
.second .shade { display: block; }
.second .status { display: none; }
.second .scroll b, .second .arr { visibility: hidden; }
.second .scroll { background: #fff; }
.second .mark { color: #9a9a9a; }
.second .menu a.on { background: #fff; border-bottom-color: #fff; }
.modal { position: absolute; z-index: 2; left: 363px; top: 85px; width: 292px; height: 111px; background: #fff; border-radius: 3px; box-shadow: 0 0 1px #222; }
.modal header { height: 37px; border-bottom: 1px solid #e4e6e9; display: flex; align-items: center; justify-content: space-between; padding: 0 10px 0 9px; color: #7a7a7a; }
.modal h3 { font-size: 11.600px; font-weight: 500; color: #212529; }
.modal p { font-size: 9.300px; height: 42px; line-height: 33px; padding-left: 9px; letter-spacing: -.15px; }
.modal p span { font: 9px "DejaVu Sans", sans-serif; }
.modal footer { display: flex; justify-content: flex-end; gap: 5px; padding-right: 10px; }
.modal button { height: 23px; border: 0; border-radius: 2px; font: 9.300px "Open Sans", sans-serif; letter-spacing: -.2px; }
.cancel { width: 43px; background: #6c757d; color: #fff; }
.go { width: 44px; background: #adff2f; color: #12801a; }
```
FILE: script.js
```js
// Both windows share the same desktop markup; only the clock differs.
const desktop = document.getElementById('desktop');
document.querySelectorAll('.shot').forEach(shot => {
  shot.prepend(desktop.content.cloneNode(true));
  shot.querySelector('.time').textContent = shot.dataset.time;
});
```
